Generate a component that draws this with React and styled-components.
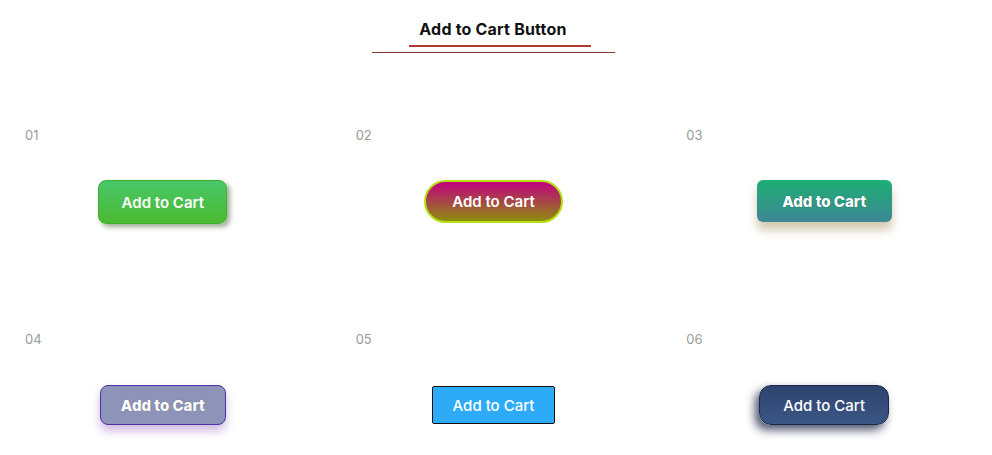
import styled, { createGlobalStyle } from "styled-components";

const GlobalStyle = createGlobalStyle`
  body {
    margin: 0;
    background: #fff;
    font-family: Inter, "Open Sans", sans-serif;
  }
`;

const buttons = [
  { id: "01", variant: "green" },
  { id: "02", variant: "pill" },
  { id: "03", variant: "teal" },
  { id: "04", variant: "lavender" },
  { id: "05", variant: "sky" },
  { id: "06", variant: "navy" },
];

const App = () => {
  return (
    <>
      <GlobalStyle />
      <Page>
        <Header>
          <Title>Add to Cart Button</Title>
          <RedBar />
          <ThinLine />
        </Header>
        <Grid>
          {buttons.map((b) => (
            <Cell key={b.id}>
              <Num>{b.id}</Num>
              <ButtonWrap>
                <CartButton variant={b.variant}>Add to Cart</CartButton>
              </ButtonWrap>
            </Cell>
          ))}
        </Grid>
      </Page>
    </>
  );
};

export default App;

const Page = styled.div`
  width: 992px;
  height: 455px;
  overflow: hidden;
`;

const Header = styled.div`
  display: flex;
  flex-direction: column;
  align-items: center;
  padding: 18px 6px 0 0;
`;

const Title = styled.h2`
  margin: 0;
  font-size: 16px;
  line-height: 22px;
  font-weight: 700;
  letter-spacing: 0.2px;
  color: #111;
`;

const RedBar = styled.div`
  width: 182px;
  height: 2px;
  margin-top: 5px;
  margin-left: 14px;
  background: #b13a30;
`;

const ThinLine = styled.div`
  width: 243px;
  height: 1px;
  margin-top: 5px;
  background: #8a3a33;
`;

const Grid = styled.div`
  display: grid;
  grid-template-columns: repeat(3, 1fr);
  grid-template-rows: 204px auto;
  margin-top: 73px;
`;

const Cell = styled.div`
  padding: 0 30px 0 25px;
  display: flex;
  flex-direction: column;
`;

const Num = styled.span`
  font-size: 13px;
  line-height: 18px;
  color: #9a9a9a;
`;

const ButtonWrap = styled.div`
  display: flex;
  justify-content: center;
  margin-top: 36px;
`;

const variants = {
  green: `
    width: 129px;
    height: 44px;
    border: 1px solid #3fae2e;
    border-radius: 8px;
    background: linear-gradient(#48c76a, #4cba30);
    box-shadow: 3px 3px 5px rgba(40, 70, 20, 0.45);
    font-weight: 600;
  `,
  pill: `
    width: 139px;
    height: 43px;
    border: 2px solid #b6e011;
    border-radius: 22px;
    background: linear-gradient(#c0007f, #8e8c10);
    font-weight: 600;
  `,
  teal: `
    width: 135px;
    height: 42px;
    border: none;
    border-radius: 6px;
    background: linear-gradient(#1daf73, #3d8795);
    box-shadow: 0 8px 10px rgba(130, 100, 30, 0.35);
    font-weight: 800;
    text-shadow: 0 0 1px rgba(0, 0, 0, 0.4);
  `,
  lavender: `
    width: 126px;
    height: 40px;
    border: 1px solid #4b34a6;
    border-radius: 8px;
    background: #8d94b7;
    box-shadow: 0 6px 10px rgba(120, 60, 170, 0.35);
    font-weight: 800;
    text-shadow: 0 0 1px rgba(0, 0, 0, 0.4);
    margin-top: 1px;
  `,
  sky: `
    width: 123px;
    height: 38px;
    border: 1px solid #111;
    border-radius: 2px;
    background: #2eabf6;
    font-weight: 500;
    margin-top: 2px;
  `,
  navy: `
    width: 130px;
    height: 40px;
    border: 1px solid #1c2846;
    border-radius: 12px;
    background: linear-gradient(#2e446e, #3b5686);
    box-shadow: -4px 5px 10px rgba(20, 30, 60, 0.75);
    font-weight: 500;
    margin-top: 1px;
  `,
};

const CartButton = styled.button`
  box-sizing: border-box;
  font-family: Inter, "Open Sans", sans-serif;
  font-size: 15px;
  color: #fff;
  cursor: pointer;
  padding: 0;
  ${({ variant }) => variants[variant]}
`;
